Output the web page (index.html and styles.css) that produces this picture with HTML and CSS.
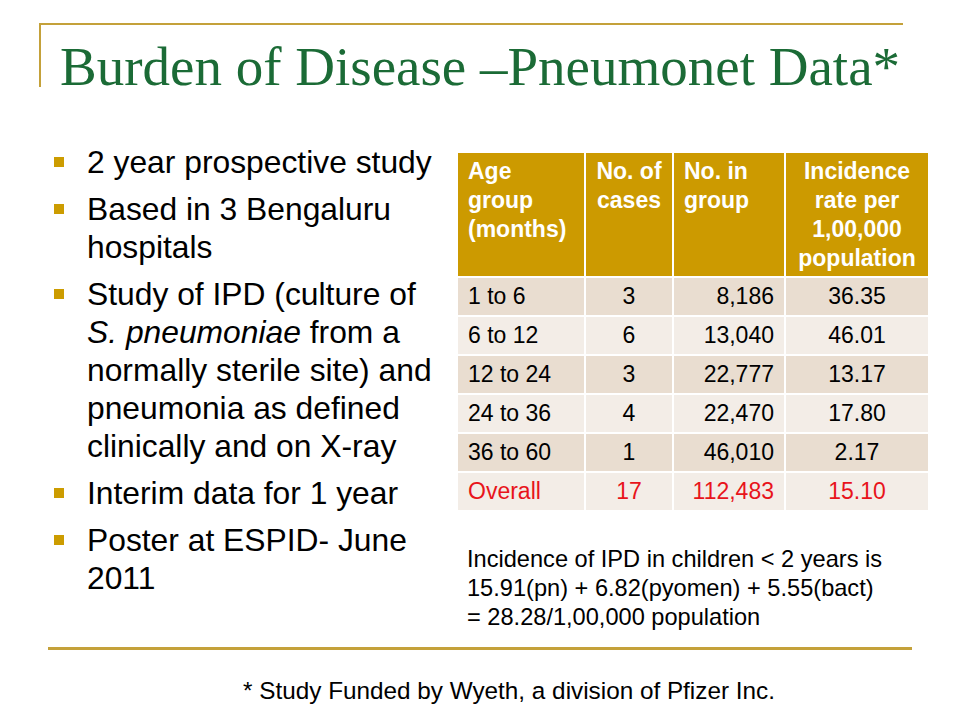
FILE: index.html
```html
<!DOCTYPE html>
<html>
<head>
<meta charset="utf-8">
<link rel="stylesheet" href="styles.css">
</head>
<body>
<div class="slide">
  <header class="title-box">
    <h1 class="title">Burden of Disease –Pneumonet Data*</h1>
  </header>
  <main class="content">
    <ul class="bullets">
      <li>2 year prospective study</li>
      <li>Based in 3 Bengaluru hospitals</li>
      <li>Study of IPD (culture of <i>S. pneumoniae</i> from a normally sterile site) and pneumonia as defined clinically and on X-ray</li>
      <li>Interim data for 1 year</li>
      <li>Poster at ESPID- June 2011</li>
    </ul>
    <section class="right">
      <table class="data">
        <colgroup>
          <col class="w1"><col class="w2"><col class="w3"><col class="w4">
        </colgroup>
        <thead>
          <tr>
            <th class="c1">Age group (months)</th>
            <th class="c2">No. of cases</th>
            <th class="c3">No. in group</th>
            <th class="c4">Incidence rate per 1,00,000 population</th>
          </tr>
        </thead>
        <tbody>
          <tr class="odd"><td class="c1">1 to 6</td><td class="c2">3</td><td class="c3">8,186</td><td class="c4">36.35</td></tr>
          <tr class="even"><td class="c1">6 to 12</td><td class="c2">6</td><td class="c3">13,040</td><td class="c4">46.01</td></tr>
          <tr class="odd"><td class="c1">12 to 24</td><td class="c2">3</td><td class="c3">22,777</td><td class="c4">13.17</td></tr>
          <tr class="even"><td class="c1">24 to 36</td><td class="c2">4</td><td class="c3">22,470</td><td class="c4">17.80</td></tr>
          <tr class="odd"><td class="c1">36 to 60</td><td class="c2">1</td><td class="c3">46,010</td><td class="c4">2.17</td></tr>
          <tr class="even total"><td class="c1">Overall</td><td class="c2">17</td><td class="c3">112,483</td><td class="c4">15.10</td></tr>
        </tbody>
      </table>
      <p class="note">Incidence of IPD in children &lt; 2 years is 15.91(pn) + 6.82(pyomen) + 5.55(bact) = 28.28/1,00,000 population</p>
    </section>
  </main>
  <footer class="footer">
    <p class="footnote">* Study Funded by Wyeth, a division of Pfizer Inc.</p>
  </footer>
</div>
</body>
</html>
```
FILE: styles.css
```css
html, body {
  margin: 0;
  padding: 0;
  background: #fff;
}
.slide {
  width: 960px;
  height: 720px;
  position: relative;
  overflow: hidden;
  font-family: "Liberation Sans", Arial, sans-serif;
  color: #000;
}
.title-box {
  margin: 23px 0 0 39px;
  width: 864px;
  height: 64px;
  border-top: 2px solid #c4a13a;
  border-left: 2px solid #c4a13a;
  box-sizing: border-box;
}
.title {
  margin: 0;
  padding: 14px 0 0 19px;
  font-family: "Liberation Serif", "Times New Roman", serif;
  font-weight: normal;
  font-size: 55px;
  line-height: 56px;
  color: #1b6b36;
  white-space: nowrap;
}
.content {
  display: grid;
  grid-template-columns: 387px 472px;
  column-gap: 17px;
  margin: 56px 0 0 52px;
}
.bullets {
  list-style: none;
  margin: 0;
  padding: 0;
  font-size: 31.8px;
  line-height: 38px;
}
.bullets li {
  position: relative;
  padding-left: 35px;
  margin-bottom: 9px;
}
.bullets li::before {
  content: "";
  position: absolute;
  left: 2px;
  top: 14px;
  width: 10px;
  height: 10px;
  background: #cc9c00;
}
.right {
  padding-top: 8px;
}
.data {
  border-collapse: collapse;
  table-layout: fixed;
  width: 472px;
  font-size: 23px;
}
.w1 { width: 128px; }
.w2 { width: 88px; }
.w3 { width: 112px; }
.w4 { width: 144px; }
.data th, .data td {
  border: 2px solid #fff;
  padding: 0 10px;
  vertical-align: top;
}
.data th {
  background: #cc9a00;
  color: #fff;
  font-weight: bold;
  line-height: 29px;
  padding-top: 4px;
  padding-bottom: 3px;
}
.data th.c2 {
  padding: 4px 4px 3px;
}
.data td {
  line-height: 37px;
  height: 37px;
}
.data td span { display: inline; }
.c1 { text-align: left; }
.c2 { text-align: center; }
.c4 { text-align: center; }
th.c3 { text-align: left; }
td.c3 { text-align: right; }
.odd td { background: #e9ddd0; }
.even td { background: #f3ede7; }
.total td { color: #e8141b; }
.note {
  margin: 33px 0 0 11px;
  font-size: 23.6px;
  line-height: 29px;
  width: 420px;
}
.footer {
  position: absolute;
  left: 48px;
  top: 647px;
  width: 864px;
  border-top: 3px solid #c4a13a;
}
.footnote {
  margin: 27px 0 0 0;
  padding-left: 58px;
  text-align: center;
  font-size: 24.3px;
  line-height: 28px;
}
```
